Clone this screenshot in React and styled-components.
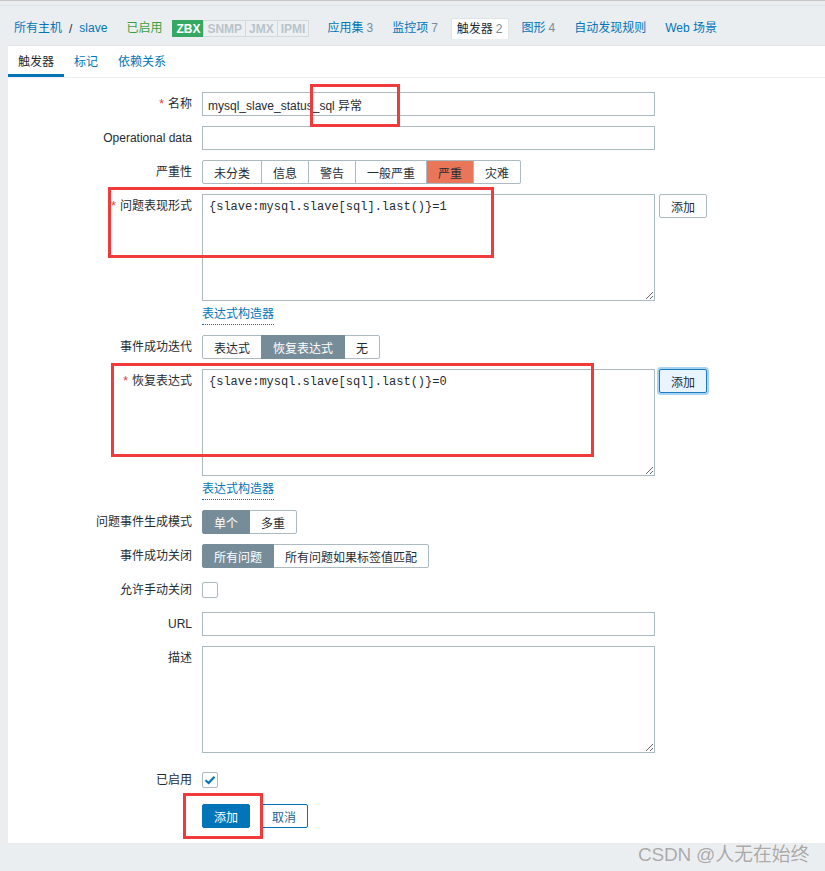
import React from "react";
import styled, { createGlobalStyle, css } from "styled-components";

const GlobalStyle = createGlobalStyle`
  html, body { margin: 0; padding: 0; }
  body {
    background: #ebeef0;
    font-family: "Liberation Sans", Arial, "Noto Sans CJK SC", sans-serif;
    font-size: 12px;
    color: #1f2c33;
  }
  * { box-sizing: border-box; }
`;

const Page = styled.div`
  position: relative;
  width: 825px;
  min-height: 871px;
  border-top: 1px solid #c6c6c6;
  padding-top: 4px;
  overflow: hidden;
`;

const Nav = styled.nav`
  display: flex;
  align-items: center;
  gap: 7px;
  border-top: 1px solid #dde3e6;
  padding: 12px 0 6px 8px;
  height: 40px;
`;

const Crumbs = styled.div`
  display: flex;
  align-items: center;
  gap: 7px;
  padding: 0 6px;
  height: 21px;
`;

const NavLink = styled.a`
  display: inline-flex;
  align-items: center;
  height: 21px;
  padding: ${(p) => (p.$bare ? "0" : "0 6px")};
  color: ${(p) => (p.$active ? "#1f2c33" : p.$green ? "#3d9e3f" : "#0275b8")};
  background: ${(p) => (p.$active ? "#fff" : "transparent")};
  border: ${(p) => (p.$active ? "1px solid #dfe4e7" : "none")};
  border-bottom: none;
  text-decoration: none;
  white-space: nowrap;
  line-height: 21px;
  ${(p) => p.$active && css`padding: 0 5px;`}
`;

const Sep = styled.span`
  color: #1f2c33;
`;

const Count = styled.span`
  color: #768d99;
  margin-left: 3px;
`;

const Badges = styled.div`
  display: flex;
  margin-left: -3px;
  margin-right: 5px;
`;

const Badge = styled.span`
  display: inline-flex;
  align-items: center;
  height: 17px;
  padding: 0 3px;
  font-weight: bold;
  font-size: 12px;
  color: ${(p) => (p.$on ? "#fff" : "#b8c4ca")};
  background: ${(p) => (p.$on ? "#35a864" : "#edf0f2")};
  border: 1px solid ${(p) => (p.$on ? "#35a864" : "#d3dadd")};
  margin-left: ${(p) => (p.$first ? "0" : "-1px")};
`;

const Panel = styled.section`
  margin-left: 8px;
  background: #fff;
  border-top: 1px solid #dfe4e7;
  padding-bottom: 15px;
`;

const Tabs = styled.div`
  display: flex;
  height: 32px;
  border-bottom: 1px solid #ebeef0;
`;

const Tab = styled.a`
  display: flex;
  align-items: center;
  padding: 0 10px;
  height: 31px;
  border-bottom: 3px solid ${(p) => (p.$active ? "#0275b8" : "transparent")};
  color: ${(p) => (p.$active ? "#1f2c33" : "#0275b8")};
  text-decoration: none;
  padding-top: 1px;
`;

const Form = styled.div`
  display: flex;
  flex-direction: column;
  gap: 10px;
  padding-top: 14px;
`;

const Row = styled.div`
  display: grid;
  grid-template-columns: 184px 1fr;
  column-gap: 10px;
  margin-top: ${(p) => p.$mt || 0}px;
`;

const Label = styled.label`
  text-align: right;
  line-height: 24px;
  white-space: nowrap;
  align-self: start;
`;

const Req = styled.span`
  color: #e33734;
  margin-right: 4px;
`;

const Control = styled.div`
  display: flex;
  flex-direction: column;
  align-items: flex-start;
`;

const Line = styled.div`
  display: flex;
  align-items: flex-start;
`;

const TextInput = styled.input`
  width: 453px;
  height: 24px;
  border: 1px solid #acbbc2;
  padding: 0 5px;
  font-family: "Liberation Sans", Arial, "Noto Sans CJK SC", sans-serif;
  font-size: 12px;
  color: #1f2c33;
  background: #fff;
  outline: none;
`;

const Area = styled.textarea`
  width: 453px;
  height: 107px;
  border: 1px solid #acbbc2;
  padding: 4px 6px;
  font-family: "Liberation Mono", "Courier New", monospace;
  font-size: 12px;
  line-height: 16px;
  color: #1f2c33;
  resize: both;
  outline: none;
  margin: 0;
  display: block;
`;

const Button = styled.button`
  height: 24px;
  padding: 0 11px;
  border-radius: 2px;
  font-family: "Liberation Sans", Arial, "Noto Sans CJK SC", sans-serif;
  font-size: 12px;
  cursor: pointer;
  margin-left: ${(p) => p.$ml || 0}px;
  ${(p) =>
    p.$variant === "main"
      ? css`
          background: #0275b8;
          border: 1px solid #0275b8;
          color: #fff;
        `
      : p.$variant === "alt"
      ? css`
          background: #fff;
          border: 1px solid #0275b8;
          color: #1f5f94;
        `
      : p.$focus
      ? css`
          background: #e8f5ff;
          border: 1px solid #1e7ac0;
          color: #1f2c33;
          box-shadow: 0 0 0 2px #a8d3f3;
        `
      : css`
          background: #fff;
          border: 1px solid #acbbc2;
          color: #1f2c33;
        `}
`;

const Builder = styled.a`
  margin-top: 4px;
  line-height: 18px;
  height: 20px;
  color: #0275b8;
  text-decoration: none;
  border-bottom: 1px dotted #0275b8;
`;

const Radio = styled.div`
  display: flex;
`;

const RadioBtn = styled.span`
  display: inline-flex;
  align-items: center;
  height: 24px;
  padding: 0 11px;
  border: 1px solid ${(p) => (p.$sel && p.$solid ? p.$bg : "#acbbc2")};
  background: ${(p) => (p.$sel ? p.$bg : "#fff")};
  color: ${(p) => (p.$sel && p.$solid ? "#fff" : "#1f2c33")};
  white-space: nowrap;
  position: relative;
  z-index: ${(p) => (p.$sel ? 1 : 0)};
  &:not(:first-child) { margin-left: -1px; }
  &:first-child { border-radius: 2px 0 0 2px; }
  &:last-child { border-radius: 0 2px 2px 0; }
`;

const CheckRow = styled.div`
  height: 24px;
  display: flex;
  align-items: center;
`;

const Check = styled.span`
  width: 16px;
  height: 16px;
  border: 1px solid #acbbc2;
  border-radius: 2px;
  background: #fff;
  display: inline-flex;
  align-items: center;
  justify-content: center;
`;

const Actions = styled.div`
  display: flex;
  gap: 10px;
`;

const Mark = styled.span`
  position: absolute;
  border: 3px solid #f13b3b;
  pointer-events: none;
`;

const Watermark = styled.span`
  position: absolute;
  left: 638px;
  top: 838px;
  font-size: 19px;
  font-family: "Liberation Sans", Arial, "Noto Sans CJK SC", sans-serif;
  color: #a9a9a9;
  text-shadow: 0 0 1px #ffffff;
  white-space: nowrap;
  letter-spacing: -0.2px;
`;

const severities = ["未分类", "信息", "警告", "一般严重", "严重", "灾难"];

export default function App() {
  return (
    <>
      <GlobalStyle />
      <Page>
        <Nav>
          <Crumbs>
            <NavLink $bare>所有主机</NavLink>
            <Sep>/</Sep>
            <NavLink $bare>slave</NavLink>
          </Crumbs>
          <NavLink $green>已启用</NavLink>
          <Badges>
            <Badge $on $first>ZBX</Badge>
            <Badge>SNMP</Badge>
            <Badge>JMX</Badge>
            <Badge>IPMI</Badge>
          </Badges>
          <NavLink>应用集<Count>3</Count></NavLink>
          <NavLink>监控项<Count>7</Count></NavLink>
          <NavLink $active>触发器<Count>2</Count></NavLink>
          <NavLink>图形<Count>4</Count></NavLink>
          <NavLink>自动发现规则</NavLink>
          <NavLink>Web 场景</NavLink>
        </Nav>

        <Panel>
          <Tabs>
            <Tab $active>触发器</Tab>
            <Tab>标记</Tab>
            <Tab>依赖关系</Tab>
          </Tabs>
          <Form>
            <Row>
              <Label><Req>*</Req>名称</Label>
              <Control>
                <TextInput defaultValue="mysql_slave_status_sql 异常" />
              </Control>
            </Row>
            <Row>
              <Label>Operational data</Label>
              <Control>
                <TextInput defaultValue="" />
              </Control>
            </Row>
            <Row>
              <Label>严重性</Label>
              <Control>
                <Radio>
                  {severities.map((s) => (
                    <RadioBtn key={s} $sel={s === "严重"} $bg="#e97659">{s}</RadioBtn>
                  ))}
                </Radio>
              </Control>
            </Row>
            <Row>
              <Label><Req>*</Req>问题表现形式</Label>
              <Control>
                <Line>
                  <Area defaultValue="{slave:mysql.slave[sql].last()}=1" spellCheck={false} />
                  <Button $ml={4}>添加</Button>
                </Line>
                <Builder>表达式构造器</Builder>
              </Control>
            </Row>
            <Row>
              <Label>事件成功迭代</Label>
              <Control>
                <Radio>
                  <RadioBtn>表达式</RadioBtn>
                  <RadioBtn $sel $solid $bg="#768d99">恢复表达式</RadioBtn>
                  <RadioBtn>无</RadioBtn>
                </Radio>
              </Control>
            </Row>
            <Row>
              <Label><Req>*</Req>恢复表达式</Label>
              <Control>
                <Line>
                  <Area defaultValue="{slave:mysql.slave[sql].last()}=0" spellCheck={false} />
                  <Button $ml={4} $focus>添加</Button>
                </Line>
                <Builder>表达式构造器</Builder>
              </Control>
            </Row>
            <Row>
              <Label>问题事件生成模式</Label>
              <Control>
                <Radio>
                  <RadioBtn $sel $solid $bg="#768d99">单个</RadioBtn>
                  <RadioBtn>多重</RadioBtn>
                </Radio>
              </Control>
            </Row>
            <Row>
              <Label>事件成功关闭</Label>
              <Control>
                <Radio>
                  <RadioBtn $sel $solid $bg="#768d99">所有问题</RadioBtn>
                  <RadioBtn>所有问题如果标签值匹配</RadioBtn>
                </Radio>
              </Control>
            </Row>
            <Row>
              <Label>允许手动关闭</Label>
              <CheckRow>
                <Check />
              </CheckRow>
            </Row>
            <Row>
              <Label>URL</Label>
              <Control>
                <TextInput defaultValue="" />
              </Control>
            </Row>
            <Row>
              <Label>描述</Label>
              <Control>
                <Area defaultValue="" />
              </Control>
            </Row>
            <Row $mt={5}>
              <Label>已启用</Label>
              <CheckRow>
                <Check>
                  <svg width="12" height="10" viewBox="0 0 12 10">
                    <path d="M1.5 5.2 L4.6 8 L10.5 1.8" fill="none" stroke="#0275b8" strokeWidth="2.2" />
                  </svg>
                </Check>
              </CheckRow>
            </Row>
            <Row $mt={2}>
              <span />
              <Actions>
                <Button $variant="main">添加</Button>
                <Button $variant="alt">取消</Button>
              </Actions>
            </Row>
          </Form>
        </Panel>

        <Mark style={{ left: 310, top: 83, width: 90, height: 43 }} />
        <Mark style={{ left: 108, top: 186, width: 386, height: 71 }} />
        <Mark style={{ left: 111, top: 362, width: 483, height: 94 }} />
        <Mark style={{ left: 183, top: 792, width: 80, height: 46 }} />
        <Watermark>CSDN @人无在始终</Watermark>
      </Page>
    </>
  );
}
